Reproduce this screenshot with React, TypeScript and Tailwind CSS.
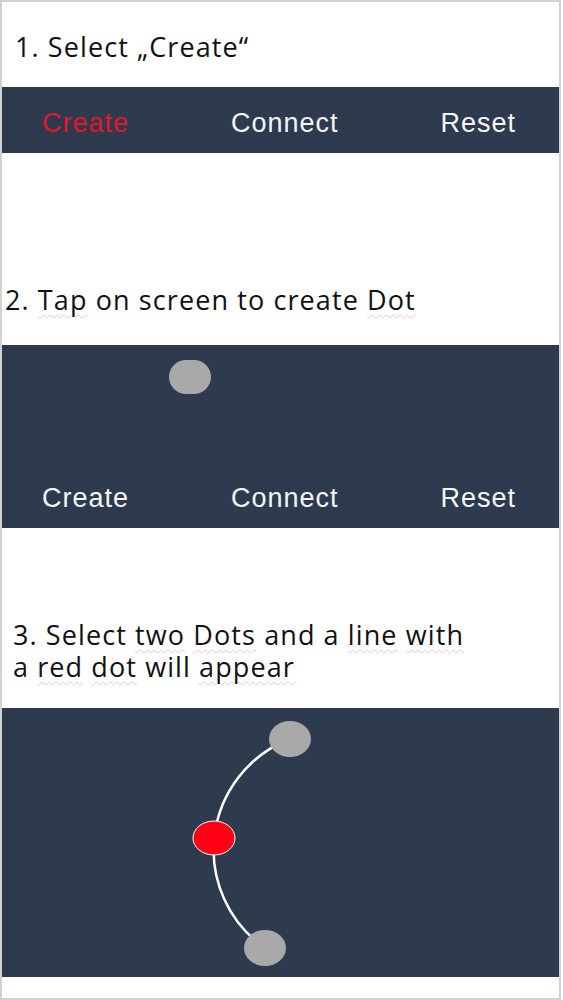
import React from 'react';

const Sq: React.FC<{ children: React.ReactNode }> = ({ children }) => (
  <span className="underline decoration-wavy decoration-[#efc3ca] decoration-1 underline-offset-[4px]">{children}</span>
);

const Buttons: React.FC<{ active?: boolean }> = ({ active }) => (
  <div className="flex items-center justify-between pl-[40px] pr-[43px] text-[27px] tracking-[1px] text-[#f4f6f8] font-['Liberation_Sans',Arial,sans-serif]">
    <span className={active ? 'text-[#e3162a]' : ''}>Create</span>
    <span>Connect</span>
    <span>Reset</span>
  </div>
);

export default function App() {
  return (
    <div className="w-[563px] h-[1000px] bg-white">
      <div className="w-[561px] h-[1000px] border-2 border-[#d2d2d2] flex flex-col font-['Open_Sans',sans-serif] text-[27px] tracking-[1.1px] leading-[32px] text-[#111]">
        <div className="h-[85px] flex items-center pl-[13px] pt-[4px]">1. Select „Create“</div>

        <div className="h-[66px] flex items-center bg-[#2e3a4d] pt-[6px]">
          <div className="w-full"><Buttons active /></div>
        </div>

        <div className="h-[192px] flex flex-col justify-end pb-[29px] pl-[3px]">
          <p>
            2. <Sq>Tap</Sq> on screen to create <Sq>Dot</Sq>
          </p>
        </div>

        <div className="relative h-[183px] bg-[#2e3a4d] flex flex-col justify-end">
          <div className="absolute left-[167px] top-[15px] w-[42px] h-[34px] rounded-full bg-[#a9a9a9]" />
          <div className="h-[60px] flex items-center"><div className="w-full"><Buttons /></div></div>
        </div>

        <div className="h-[180px] flex flex-col justify-end pb-[25px] pl-[11px]">
          <p>
            3. Select <Sq>two</Sq> <Sq>Dots</Sq> and a <Sq>line</Sq> <Sq>with</Sq>
            <br />
            a <Sq>red</Sq> <Sq>dot</Sq> will <Sq>appear</Sq>
          </p>
        </div>

        <div className="relative h-[269px] bg-[#2e3a4d]">
          <svg className="absolute inset-0" width="557" height="269" viewBox="2 708 557 269">
            <path d="M 290 739 A 119 119 0 0 0 265 948" fill="none" stroke="#ffffff" strokeWidth="2.5" />
            <ellipse cx="290" cy="739" rx="21" ry="18" fill="#a9a9a9" />
            <ellipse cx="265" cy="948" rx="21" ry="18" fill="#a9a9a9" />
            <ellipse cx="214" cy="838" rx="21" ry="17" fill="#ff0014" stroke="#ffffff" strokeWidth="1" />
          </svg>
        </div>

        <div className="flex-1" />
      </div>
    </div>
  );
}
